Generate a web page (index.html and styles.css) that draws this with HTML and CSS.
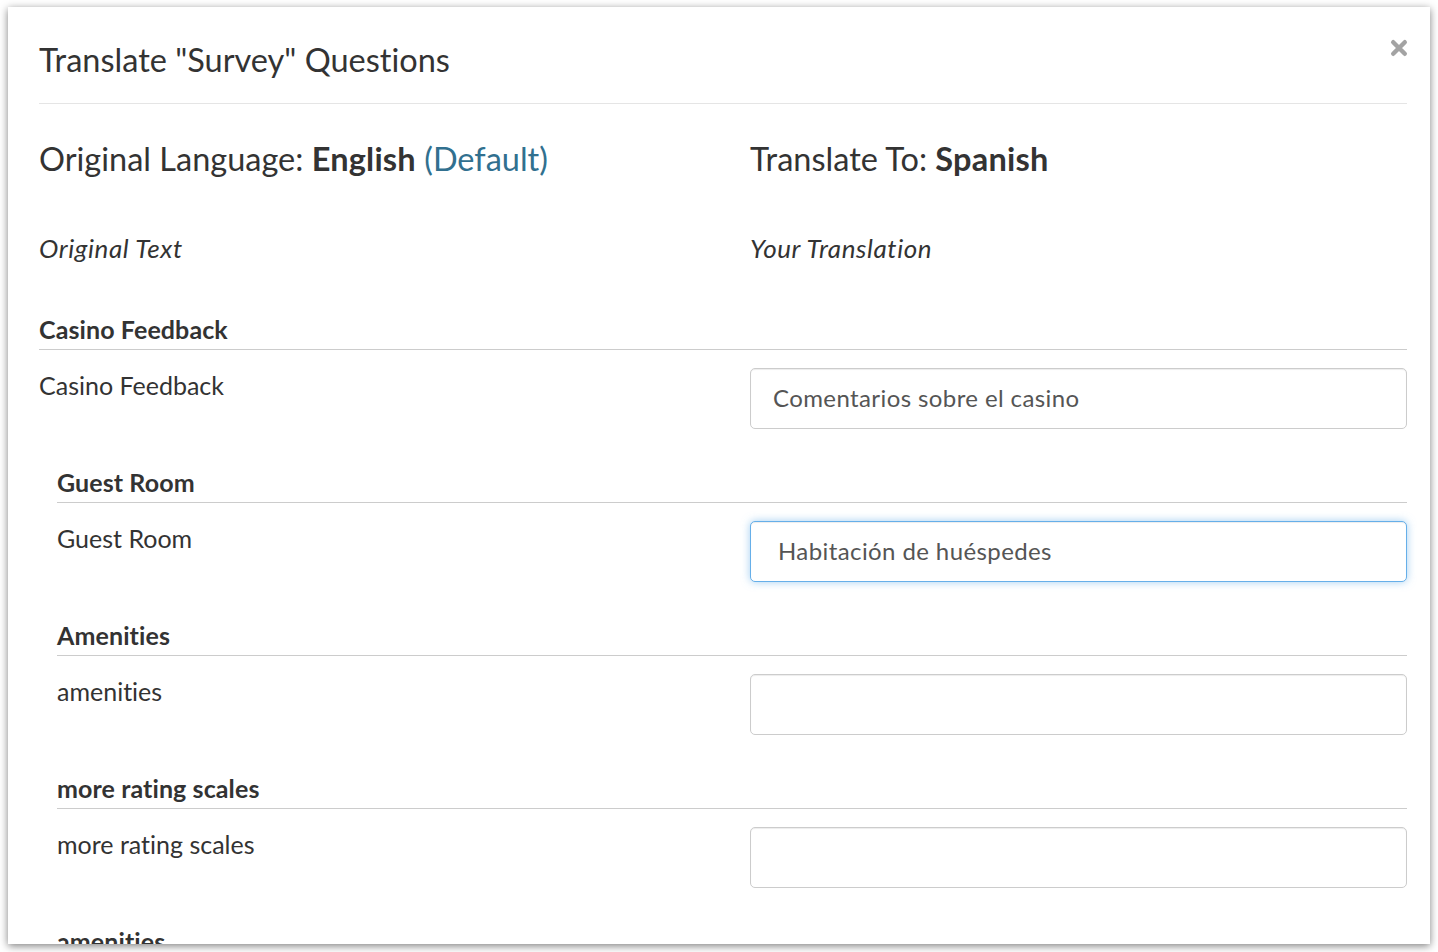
FILE: index.html
```html
<!DOCTYPE html>
<html lang="en">
<head>
<meta charset="utf-8">
<title>Translate "Survey" Questions</title>
<link rel="stylesheet" href="styles.css">
</head>
<body>
<div class="modal">
  <button class="modal-close" type="button" aria-label="Close">
    <svg width="18" height="18" viewBox="0 0 18 18" aria-hidden="true">
      <path d="M3.2 3.2 L14.8 14.8 M14.8 3.2 L3.2 14.8" stroke="currentColor" stroke-width="4.4" stroke-linecap="round"/>
    </svg>
  </button>
  <div class="modal-header">
    <h1 class="modal-title">Translate "Survey" Questions</h1>
  </div>
  <div class="modal-body">
    <div class="grid lang-row">
      <div class="lang">Original Language: <strong>English</strong> <span class="info">(Default)</span></div>
      <div class="lang">Translate To: <strong>Spanish</strong></div>
    </div>
    <div class="grid col-labels">
      <div class="col-label">Original Text</div>
      <div class="col-label">Your Translation</div>
    </div>

    <div class="section">
      <div class="section-title">Casino Feedback</div>
      <div class="grid item-row">
        <div class="item-label">Casino Feedback</div>
        <input class="field" type="text" value="Comentarios sobre el casino">
      </div>
    </div>

    <div class="group">
      <div class="section">
        <div class="section-title">Guest Room</div>
        <div class="grid item-row">
          <div class="item-label">Guest Room</div>
          <input class="field is-focused" type="text" value="Habitación de huéspedes">
        </div>
      </div>
      <div class="section">
        <div class="section-title">Amenities</div>
        <div class="grid item-row">
          <div class="item-label">amenities</div>
          <input class="field" type="text" value="">
        </div>
      </div>
      <div class="section">
        <div class="section-title">more rating scales</div>
        <div class="grid item-row">
          <div class="item-label">more rating scales</div>
          <input class="field" type="text" value="">
        </div>
      </div>
      <div class="section">
        <div class="section-title">amenities</div>
        <div class="grid item-row">
          <div class="item-label">amenities</div>
          <input class="field" type="text" value="">
        </div>
      </div>
    </div>
  </div>
</div>
</body>
</html>
```

FILE: styles.css
```css
* { box-sizing: border-box; }

html, body {
  margin: 0;
  padding: 0;
  background: #ffffff;
}

body {
  font-family: Lato, "Open Sans", "Liberation Sans", sans-serif;
  font-variant-ligatures: none;
  color: #333333;
  height: 952px;
  overflow: hidden;
}

.modal {
  position: relative;
  margin: 7px 8px 0 8px;
  width: 1422px;
  height: 937px;
  overflow: hidden;
  background: #ffffff;
  padding: 0 23px 0 31px;
  box-shadow: 0 2px 8px rgba(0, 0, 0, 0.5);
}

.modal-close {
  position: absolute;
  top: 31px;
  right: 21px;
  width: 20px;
  height: 20px;
  padding: 1px;
  border: 0;
  background: transparent;
  color: #a3a3a3;
  cursor: pointer;
}

.modal-close svg { display: block; }

.modal-header {
  padding: 34px 0 25px 0;
  border-bottom: 1px solid #e5e5e5;
}

.modal-title {
  margin: 0;
  font-size: 32.5px;
  line-height: 37px;
  font-weight: 400;
}

.grid {
  display: grid;
  grid-template-columns: 1fr 657px;
}

.lang-row {
  padding-top: 36px;
}

.lang {
  font-size: 32.5px;
  line-height: 38px;
}

.lang strong { font-weight: 700; letter-spacing: 0.2px; }

.info { color: #31708f; }

.col-labels {
  margin-top: 56px;
}

.col-label {
  font-size: 26px;
  line-height: 29px;
  font-style: italic;
  letter-spacing: 0.6px;
}

.section {
  padding-bottom: 39px;
}

.col-labels + .section {
  margin-top: 52px;
}

.section-title {
  font-size: 25px;
  line-height: 29px;
  font-weight: 700;
  letter-spacing: 0.1px;
  padding-bottom: 5px;
  border-bottom: 1px solid #cccccc;
}

.item-label {
  padding-top: 21px;
  font-size: 25px;
  line-height: 29px;
}

.field {
  margin-top: 18px;
  height: 61px;
  width: 657px;
  padding: 0 22px 2px 22px;
  border: 1px solid #cccccc;
  border-radius: 5px;
  background: #ffffff;
  font-family: Lato, "Open Sans", "Liberation Sans", sans-serif;
  font-variant-ligatures: none;
  font-size: 24px;
  letter-spacing: 0.4px;
  color: #555555;
  box-shadow: inset 0 1px 1px rgba(0, 0, 0, 0.075);
  outline: none;
}

.field.is-focused {
  padding-left: 27px;
  border-color: #66afe9;
  box-shadow: inset 0 1px 1px rgba(0, 0, 0, 0.075), 0 0 8px rgba(102, 175, 233, 0.6);
}

.group {
  margin-left: 18px;
}
```
